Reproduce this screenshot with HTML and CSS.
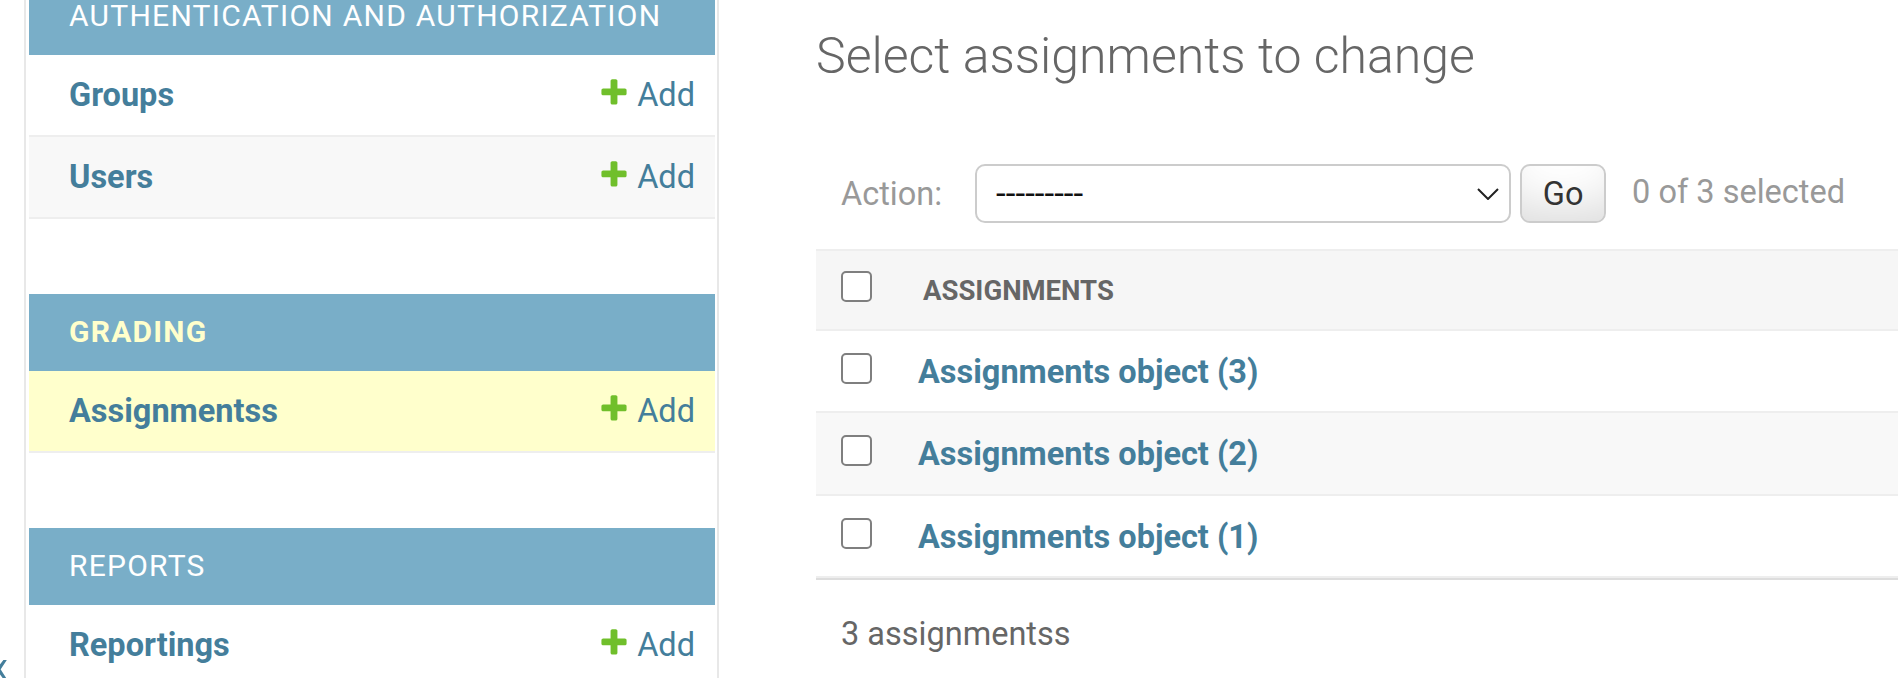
FILE: index.html
```html
<!DOCTYPE html>
<html lang="en">
<head>
<meta charset="utf-8">
<title>Select assignments to change</title>
<link rel="stylesheet" href="styles.css">
</head>
<body>
<div class="page">
  <div class="toggle"><span class="toggle-glyph">«</span></div>

  <nav class="sidebar">
    <div class="modules">
      <section class="module">
        <div class="caption">Authentication and Authorization</div>
        <div class="mrow">
          <a class="model" href="#">Groups</a>
          <a class="addlink" href="#"><svg class="plus" viewBox="0 0 1792 1792" width="32" height="32"><path fill="#70bf2b" d="M1600 796v192q0 40-28 68t-68 28h-416v416q0 40-28 68t-68 28h-192q-40 0-68-28t-28-68v-416h-416q-40 0-68-28t-28-68v-192q0-40 28-68t68-28h416v-416q0-40 28-68t68-28h192q40 0 68 28t28 68v416h416q40 0 68 28t28 68z"/></svg>Add</a>
        </div>
        <div class="mrow alt">
          <a class="model" href="#">Users</a>
          <a class="addlink" href="#"><svg class="plus" viewBox="0 0 1792 1792" width="32" height="32"><path fill="#70bf2b" d="M1600 796v192q0 40-28 68t-68 28h-416v416q0 40-28 68t-68 28h-192q-40 0-68-28t-28-68v-416h-416q-40 0-68-28t-28-68v-192q0-40 28-68t68-28h416v-416q0-40 28-68t68-28h192q40 0 68 28t28 68v416h416q40 0 68 28t28 68z"/></svg>Add</a>
        </div>
      </section>

      <section class="module">
        <div class="caption current">Grading</div>
        <div class="mrow selected">
          <a class="model" href="#">Assignmentss</a>
          <a class="addlink" href="#"><svg class="plus" viewBox="0 0 1792 1792" width="32" height="32"><path fill="#70bf2b" d="M1600 796v192q0 40-28 68t-68 28h-416v416q0 40-28 68t-68 28h-192q-40 0-68-28t-28-68v-416h-416q-40 0-68-28t-28-68v-192q0-40 28-68t68-28h416v-416q0-40 28-68t68-28h192q40 0 68 28t28 68v416h416q40 0 68 28t28 68z"/></svg>Add</a>
        </div>
      </section>

      <section class="module">
        <div class="caption">Reports</div>
        <div class="mrow">
          <a class="model" href="#">Reportings</a>
          <a class="addlink" href="#"><svg class="plus" viewBox="0 0 1792 1792" width="32" height="32"><path fill="#70bf2b" d="M1600 796v192q0 40-28 68t-68 28h-416v416q0 40-28 68t-68 28h-192q-40 0-68-28t-28-68v-416h-416q-40 0-68-28t-28-68v-192q0-40 28-68t68-28h416v-416q0-40 28-68t68-28h192q40 0 68 28t28 68v416h416q40 0 68 28t28 68z"/></svg>Add</a>
        </div>
      </section>
    </div>
  </nav>

  <main class="content">
    <h1>Select assignments to change</h1>

    <div class="actions">
      <label class="action-label" for="action">Action:</label>
      <div class="select-wrap">
        <select id="action" class="action-select">
          <option>---------</option>
        </select>
        <svg class="chevron" viewBox="0 0 22 12" width="22" height="12"><path d="M1 1l10 10L21 1" fill="none" stroke="#222" stroke-width="2"/></svg>
      </div>
      <button class="go" type="button">Go</button>
      <span class="counter">0 of 3 selected</span>
    </div>

    <div class="results">
      <div class="thead">
        <input class="check" type="checkbox">
        <span class="col-title">Assignments</span>
      </div>
      <div class="trow">
        <input class="check" type="checkbox">
        <a class="obj" href="#">Assignments object (3)</a>
      </div>
      <div class="trow alt">
        <input class="check" type="checkbox">
        <a class="obj" href="#">Assignments object (2)</a>
      </div>
      <div class="trow last">
        <input class="check" type="checkbox">
        <a class="obj" href="#">Assignments object (1)</a>
      </div>
    </div>

    <p class="paginator">3 assignmentss</p>
  </main>
</div>
</body>
</html>
```

FILE: styles.css
```css
html, body {
  margin: 0;
  padding: 0;
  background: #fff;
}

body {
  font-family: Roboto, "Noto Sans", "Liberation Sans", sans-serif;
  color: #333;
  overflow: hidden;
}

a {
  text-decoration: none;
}

.page {
  display: flex;
  height: 678px;
  overflow: hidden;
}

/* collapse toggle column */
.toggle {
  flex: 0 0 24px;
  border-right: 2px solid #e8e8e8;
  display: flex;
  align-items: flex-end;
  overflow: hidden;
}

.toggle-glyph {
  font-size: 49px;
  line-height: 49px;
  color: #447e9b;
  margin-left: -14px;
  margin-bottom: -13px;
}

/* nav sidebar */
.sidebar {
  flex: 0 0 693px;
  box-sizing: border-box;
  padding: 0 2px 0 3px;
  border-right: 2px solid #e8e8e8;
}

.modules {
  margin-top: -22px;
}

.module {
  margin-bottom: 75px;
}

.caption {
  background: #79aec8;
  color: #fff;
  font-size: 30px;
  letter-spacing: 1.25px;
  text-transform: uppercase;
  line-height: 35px;
  padding: 20px 40px 22px;
}

.caption.current {
  color: #ffc;
  font-weight: 700;
}

.mrow {
  display: flex;
  align-items: flex-start;
  height: 40px;
  padding: 20px 20px 20px 40px;
  border-bottom: 2px solid #eee;
  font-size: 32.5px;
  line-height: 40px;
}

.mrow.alt {
  background: #f8f8f8;
}

.mrow.selected {
  background: #ffc;
}

.model {
  flex: 1;
  font-weight: 700;
  color: #447e9b;
}

.addlink {
  display: flex;
  align-items: flex-start;
  color: #447e9b;
}

.plus {
  display: block;
  margin-top: 1px;
  margin-right: 7px;
}

/* main content */
.content {
  flex: 1;
  min-width: 0;
  padding: 27px 0 0 97px;
}

h1 {
  margin: 0;
  font-size: 50px;
  font-weight: 300;
  line-height: 58px;
  color: #666;
}

.actions {
  display: flex;
  align-items: center;
  height: 59px;
  margin-top: 79px;
  padding-left: 25px;
  font-size: 32.5px;
  white-space: nowrap;
}

.action-label {
  color: #999;
  margin-right: 33px;
}

.select-wrap {
  position: relative;
  width: 536px;
  height: 59px;
}

.action-select {
  appearance: none;
  -webkit-appearance: none;
  box-sizing: border-box;
  width: 100%;
  height: 100%;
  margin: 0;
  padding: 0 0 0 19px;
  border: 2px solid #ccc;
  border-radius: 10px;
  background: #fff;
  font-family: Roboto, "Noto Sans", sans-serif;
  font-size: 35px;
  color: #111;
}

.chevron {
  position: absolute;
  right: 12px;
  top: 24px;
}

.go {
  box-sizing: border-box;
  width: 86px;
  height: 59px;
  margin: 0 0 0 9px;
  padding: 0;
  border: 2px solid #ccc;
  border-radius: 10px;
  background: #fff;
  box-shadow: 0 -37px 50px -25px rgba(0, 0, 0, 0.15) inset;
  font-family: Roboto, "Noto Sans", sans-serif;
  font-size: 32.5px;
  color: #333;
}

.counter {
  margin-left: 26px;
  margin-top: -4px;
  color: #999;
}

.results {
  margin-top: 26px;
}

.check {
  appearance: none;
  -webkit-appearance: none;
  box-sizing: border-box;
  flex: 0 0 31px;
  width: 31px;
  height: 31px;
  margin: 0;
  border: 2px solid #7f7f7f;
  border-radius: 5px;
  background: #fff;
}

.thead {
  display: flex;
  align-items: flex-start;
  height: 77.5px;
  padding-left: 25px;
  background: #f6f6f6;
  border-top: 2px solid #eee;
  border-bottom: 2px solid #eee;
}

.thead .check {
  margin-top: 20px;
}

.col-title {
  margin: 22.5px 0 0 51px;
  font-size: 27.5px;
  line-height: 34px;
  font-weight: 700;
  text-transform: uppercase;
  color: #666;
}

.trow {
  display: flex;
  align-items: flex-start;
  height: 80.5px;
  padding-left: 25px;
  border-bottom: 2px solid #eee;
}

.trow.alt {
  background: #f8f8f8;
}

.trow .check {
  margin-top: 22px;
}

.obj {
  margin: 21px 0 0 46px;
  font-size: 32.5px;
  line-height: 40px;
  font-weight: 700;
  color: #447e9b;
}

.paginator {
  margin: 0;
  padding: 27px 0 23px 25px;
  border-top: 2px solid #ddd;
  font-size: 32.5px;
  line-height: 55px;
  color: #666;
}
```
